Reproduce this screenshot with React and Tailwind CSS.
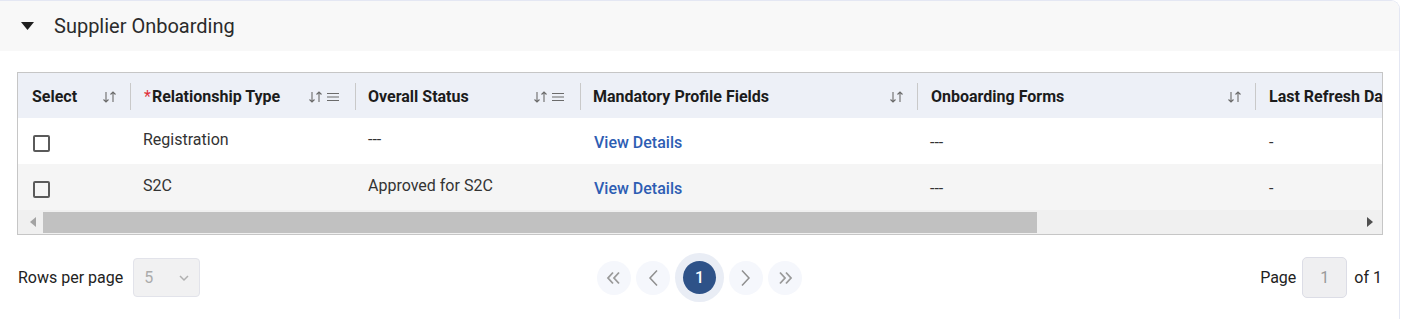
import React from 'react'

const columns = [
  { key: 'select', label: 'Select', width: 'w-[112px]', menu: false, pl: 'pl-[14px]', pr: 'pr-[12px]' },
  { key: 'rel', label: 'Relationship Type', width: 'w-[225px]', menu: true, required: true, pl: 'pl-[14px]', pr: 'pr-[16px]' },
  { key: 'status', label: 'Overall Status', width: 'w-[225px]', menu: true, pl: 'pl-[13px]', pr: 'pr-[16px]' },
  { key: 'mandatory', label: 'Mandatory Profile Fields', width: 'w-[337px]', menu: false, pl: 'pl-[13px]', pr: 'pr-[12px]' },
  { key: 'forms', label: 'Onboarding Forms', width: 'w-[338px]', menu: false, pl: 'pl-[14px]', pr: 'pr-[12px]' },
  { key: 'refresh', label: 'Last Refresh Date', width: 'w-[200px]', menu: false, pl: 'pl-[14px]', pr: 'pr-[12px]', last: true }
]

const rows = [
  { rel: 'Registration', status: '---', forms: '---', refresh: '-' },
  { rel: 'S2C', status: 'Approved for S2C', forms: '---', refresh: '-' }
]

function SortIcon() {
  return (
    <svg width="16" height="12" viewBox="0 0 16 12" fill="none" stroke="#6b6b6b" strokeWidth="1.1">
      <path d="M4 1v10M1.5 8.5L4 11l2.5-2.5" />
      <path d="M11 11V1M8.5 3.5L11 1l2.5 2.5" />
    </svg>
  )
}

function MenuIcon() {
  return (
    <svg width="12" height="10" viewBox="0 0 12 10" fill="none" stroke="#6b6b6b" strokeWidth="1.1">
      <path d="M0 1.5h12M0 5h12M0 8.5h12" />
    </svg>
  )
}

function Chevron({ dir = 'left', double = false }) {
  if (double) {
    return (
      <svg width="18" height="14" viewBox="0 0 18 14" fill="none" stroke="#9a9a9a" strokeWidth="1.8">
        {dir === 'left' ? (
          <>
            <path d="M8 1.5L3 7l5 5.5" />
            <path d="M14 1.5L9 7l5 5.5" />
          </>
        ) : (
          <>
            <path d="M4 1.5L9 7l-5 5.5" />
            <path d="M10 1.5l5 5.5-5 5.5" />
          </>
        )}
      </svg>
    )
  }
  return (
    <svg width="12" height="18" viewBox="0 0 12 18" fill="none" stroke="#8f8f8f" strokeWidth="1.5">
      <path d={dir === 'left' ? 'M10 1.5L3 9l7 7.5' : 'M2 1.5L9 9l-7 7.5'} />
    </svg>
  )
}

export default function App() {
  return (
    <div className="w-[1401px] h-[319px] bg-white font-['Roboto','Liberation_Sans',sans-serif] overflow-hidden">
      <div className="w-[1400px] h-[319px] border-t border-r border-[#e4e7f3] rounded-tr-[9px] overflow-hidden">
        {/* header */}
        <div className="h-[50px] bg-[#f8f8f8] flex items-center pl-[21px]">
          <svg width="13" height="8" viewBox="0 0 13 8">
            <path d="M0 0h13L6.5 8z" fill="#1f1f1f" />
          </svg>
          <span className="ml-[20px] text-[20px] text-[#2b2b2b] leading-none">Supplier Onboarding</span>
        </div>

        <div className="pt-[21px] pl-[17px]">
          {/* table */}
          <div className="w-[1366px] border border-[#c6c6c6] overflow-hidden">
            <div className="flex h-[45px] bg-[#edf0f7]">
              {columns.map((c, i) => (
                <div key={c.key} className={`${c.width} shrink-0 flex items-center relative pt-[3px] ${c.pl} ${c.pr}`}>
                  {i > 0 && <div className="absolute left-0 top-[10px] h-[27px] w-px bg-[#c9c9c9]" />}
                  {c.required && <span className="text-[#e0303a] text-[16px] mr-[1px] leading-none">*</span>}
                  <span className="text-[16px] font-bold text-[#1c1c1c] whitespace-nowrap">{c.label}</span>
                  {!c.last && (
                    <div className="ml-auto flex items-center gap-[3px]">
                      <SortIcon />
                      {c.menu && <MenuIcon />}
                    </div>
                  )}
                </div>
              ))}
            </div>

            {rows.map((r, idx) => (
              <div key={idx} className={`flex h-[46px] text-[16px] text-[#333] ${idx % 2 ? 'bg-[#f5f5f5]' : 'bg-white'}`}>
                <div className="w-[112px] shrink-0 flex items-center pl-[15px] pt-[4px]">
                  <div className="w-[17px] h-[17px] border-2 border-[#5a5a5a] rounded-[2px]" />
                </div>
                <div className="w-[225px] shrink-0 flex items-center pl-[13px] pb-[3px]">{r.rel}</div>
                <div className="w-[225px] shrink-0 flex items-center pl-[13px] pb-[3px]">{r.status}</div>
                <div className="w-[337px] shrink-0 flex items-center pl-[14px] pt-[3px]">
                  <span className="text-[#2d5db3] font-medium">View Details</span>
                </div>
                <div className="w-[338px] shrink-0 flex items-center pl-[13px] pt-[3px]">{r.forms}</div>
                <div className="w-[200px] shrink-0 flex items-center pl-[14px] pt-[3px]">{r.refresh}</div>
              </div>
            ))}

            {/* scrollbar */}
            <div className="h-[24px] bg-[#f0f0f0] flex items-center">
              <div className="w-[25px] flex justify-center pl-[4px]">
                <svg width="6" height="10" viewBox="0 0 6 10"><path d="M6 0v10L0 5z" fill="#a3a3a3" /></svg>
              </div>
              <div className="w-[994px] h-[21px] bg-[#c1c1c1]" />
              <div className="flex-1 flex justify-end pr-[9px]">
                <svg width="6" height="10" viewBox="0 0 6 10"><path d="M0 0v10l6-5z" fill="#505050" /></svg>
              </div>
            </div>
          </div>

          {/* pagination */}
          <div className="w-[1366px] flex items-center mt-[22px] h-[41px]">
            <div className="flex-1 flex items-center">
              <span className="text-[16px] text-[#222] ml-[1px]">Rows per page</span>
              <div className="ml-[10px] w-[67px] h-[39px] rounded-[4px] bg-[#f1f1f2] border border-[#e2e3ea] flex items-center justify-between pl-[10px] pr-[9px]">
                <span className="text-[16px] text-[#ababab]">5</span>
                <svg width="12" height="8" viewBox="0 0 12 8" fill="none" stroke="#b0b0b0" strokeWidth="1.5">
                  <path d="M2 2l4 4 4-4" />
                </svg>
              </div>
            </div>

            <div className="flex items-center gap-[5px]">
              <div className="w-[34px] h-[34px] rounded-full bg-[#f5f7fc] flex items-center justify-center">
                <Chevron dir="left" double />
              </div>
              <div className="w-[34px] h-[34px] rounded-full bg-[#f5f7fc] flex items-center justify-center">
                <Chevron dir="left" />
              </div>
              <div className="w-[49px] h-[49px] rounded-full bg-[#e9edf5] flex items-center justify-center">
                <div className="w-[33px] h-[33px] rounded-full bg-[#2e5288] flex items-center justify-center text-white text-[16px] font-medium">
                  1
                </div>
              </div>
              <div className="w-[34px] h-[34px] rounded-full bg-[#f5f7fc] flex items-center justify-center">
                <Chevron dir="right" />
              </div>
              <div className="w-[34px] h-[34px] rounded-full bg-[#f5f7fc] flex items-center justify-center">
                <Chevron dir="right" double />
              </div>
            </div>

            <div className="flex-1 flex items-center justify-end pr-[1px]">
              <span className="text-[16px] text-[#222]">Page</span>
              <div className="ml-[6px] w-[45px] h-[41px] rounded-[5px] bg-[#efeff1] border border-[#dcdde6] flex items-center justify-center text-[16px] text-[#9a9a9a]">
                1
              </div>
              <span className="ml-[7px] text-[16px] text-[#222]">of 1</span>
            </div>
          </div>
        </div>
      </div>
    </div>
  )
}
